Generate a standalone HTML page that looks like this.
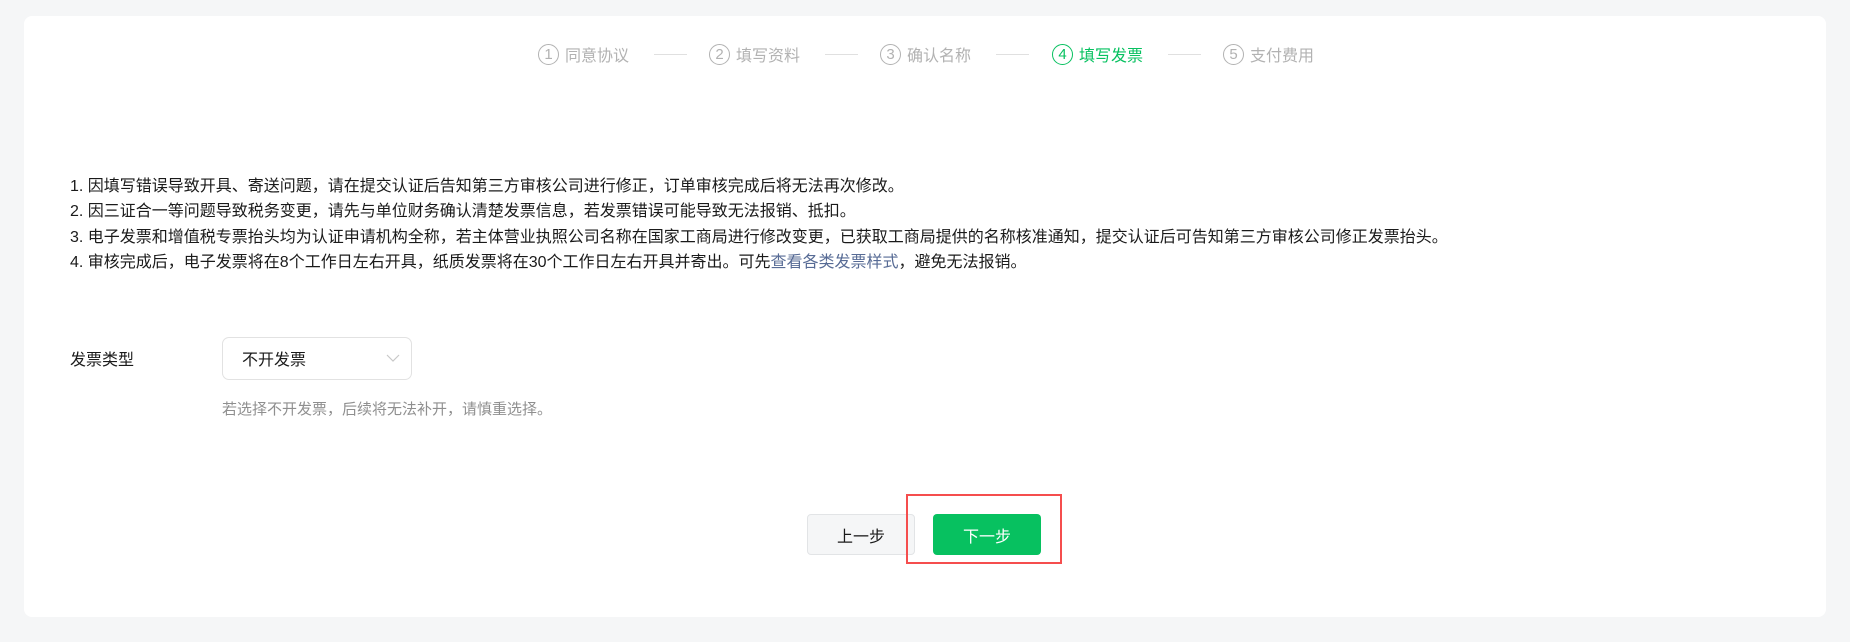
<!DOCTYPE html>
<html><head><meta charset="utf-8"><style>
*{margin:0;padding:0;box-sizing:border-box}
body{width:1850px;height:642px;background:#f5f6f7;font-family:"Liberation Sans","Noto Sans CJK SC",sans-serif;position:relative;overflow:hidden;color:#1a1a1a}
.card{position:absolute;left:24px;top:16px;width:1802px;height:601px;background:#fff;border-radius:8px}
.abs{position:absolute;white-space:nowrap}
.step{position:absolute;top:43px;height:22px;display:flex;align-items:center;font-size:16px;color:#b2b2b2}
.c{width:21px;height:21px;border:1px solid #b2b2b2;border-radius:50%;display:flex;align-items:center;justify-content:center;font-size:15px;margin-right:6px}
.step.on{color:#07c160}.step.on .c{border-color:#07c160}
.ln{position:absolute;top:54px;height:1px;width:33px;background:#e0e0e0}
.list{position:absolute;left:70px;top:174px;font-size:16px;line-height:25.3px;letter-spacing:0}
.list a{color:#576b95;text-decoration:none}
.btn{position:absolute;top:514px;width:108px;height:41px;border-radius:4px;font-size:16px;display:flex;align-items:center;justify-content:center}
</style></head><body>
<div class="card"></div>
<div class="step" style="left:538px"><span class="c">1</span>同意协议</div>
<div class="ln" style="left:654px"></div>
<div class="step" style="left:709px"><span class="c">2</span>填写资料</div>
<div class="ln" style="left:825px"></div>
<div class="step" style="left:880px"><span class="c">3</span>确认名称</div>
<div class="ln" style="left:996px"></div>
<div class="step on" style="left:1052px"><span class="c">4</span>填写发票</div>
<div class="ln" style="left:1168px"></div>
<div class="step" style="left:1223px"><span class="c">5</span>支付费用</div>
<div class="list">
<div>1. 因填写错误导致开具、寄送问题，请在提交认证后告知第三方审核公司进行修正，订单审核完成后将无法再次修改。</div>
<div>2. 因三证合一等问题导致税务变更，请先与单位财务确认清楚发票信息，若发票错误可能导致无法报销、抵扣。</div>
<div>3. 电子发票和增值税专票抬头均为认证申请机构全称，若主体营业执照公司名称在国家工商局进行修改变更，已获取工商局提供的名称核准通知，提交认证后可告知第三方审核公司修正发票抬头。</div>
<div>4. 审核完成后，电子发票将在8个工作日左右开具，纸质发票将在30个工作日左右开具并寄出。可先<a>查看各类发票样式</a>，避免无法报销。</div>
</div>
<div class="abs" style="left:70px;top:346px;font-size:16px">发票类型</div>
<div class="abs" style="left:222px;top:337px;width:190px;height:43px;border:1px solid #e2e2e2;border-radius:7px"></div>
<div class="abs" style="left:242px;top:346px;font-size:16px">不开发票</div>
<svg class="abs" style="left:386px;top:353px" width="14" height="10" viewBox="0 0 14 10"><path d="M1 2l6 6 6-6" fill="none" stroke="#c8c8c8" stroke-width="1.2"/></svg>
<div class="abs" style="left:222px;top:398px;font-size:15px;color:#8f8f8f">若选择不开发票，后续将无法补开，请慎重选择。</div>
<div class="btn" style="left:807px;background:#f5f6f7;border:1px solid #e2e4e6;color:#1a1a1a">上一步</div>
<div class="abs" style="left:906px;top:494px;width:156px;height:70px;border:2px solid #f54e4e"></div>
<div class="btn" style="left:933px;background:#07c160;color:#fff">下一步</div>
</body></html>
